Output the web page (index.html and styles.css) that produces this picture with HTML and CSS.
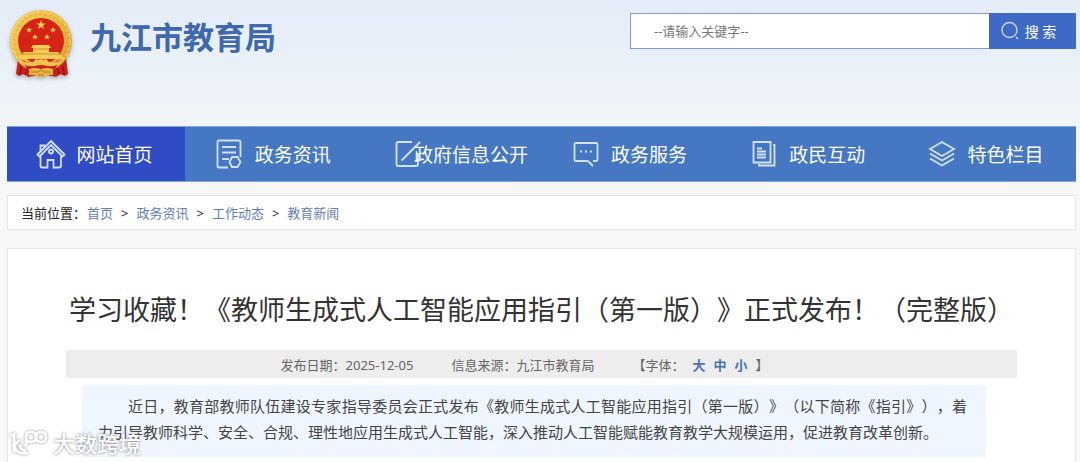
FILE: index.html
```html
<!DOCTYPE html>
<html lang="zh-CN">
<head>
<meta charset="utf-8">
<meta name="viewport" content="width=device-width, initial-scale=1">
<title>九江市教育局</title>
<link rel="stylesheet" href="styles.css">
</head>
<body>
<header class="header">
  <a class="brand" href="#">
    <svg class="emblem" viewBox="0 0 66 74" aria-hidden="true">
      <defs>
        <linearGradient id="gold" x1="0" y1="0" x2="1" y2="1">
          <stop offset="0" stop-color="#f6cf5e"/><stop offset=".5" stop-color="#eebb42"/><stop offset="1" stop-color="#d99a2b"/>
        </linearGradient>
        <path id="star" d="M0-5 1.2-1.6 4.8-1.5 1.9.6 2.9 4 0 2-2.9 4-1.9.6-4.8-1.5-1.2-1.6Z"/>
      </defs>
      <path d="M9 48 7 64l3 2 5-2 4 3 9-2 5 2 5-2 9 2 4-3 5 2 3-2-2-16Z" fill="#c9201c"/>
      <path d="M12 56l-1 8M18 58l-2 7M54 56l1 8M48 58l2 7" stroke="#8e1513" stroke-width="1.5"/>
      <circle cx="32" cy="31" r="31" fill="url(#gold)"/>
      <circle cx="32" cy="31" r="27" fill="none" stroke="#d79a30" stroke-width="4" stroke-dasharray="2 3" opacity=".3"/>
      <circle cx="32" cy="31" r="29" fill="none" stroke="#fae08c" stroke-width="1" stroke-dasharray="4 2"/>
      <circle cx="32" cy="31" r="23" fill="#d62318"/>
      <g fill="#f5cd54">
        <use href="#star" transform="translate(32 15)"/>
        <use href="#star" transform="translate(20 20) scale(.65)"/>
        <use href="#star" transform="translate(44 20) scale(.65)"/>
        <use href="#star" transform="translate(26 27) scale(.65)"/>
        <use href="#star" transform="translate(38 27) scale(.65)"/>
        <path d="M24 35h16l2 3h-2v4h10v3h3l2 4H9l2-4h3v-3h10v-4h-2Z"/>
      </g>
      <path d="M13 44h38M24 39h16" stroke="#cf902b"/>
      <path d="M13 50q19 9 38 0l-5 9H18Z" fill="#c9201c"/>
      <path d="M11 49q6 5 13 3l3-3 3 1 2-2 2 2 3-1 3 3q7 2 13-3-4 9-15 7-6-2-12 0-11 2-15-7Z" fill="#efc04c"/>
      <path d="M20 59q6-2 12 0 6-2 12 0v6q-6-1-9 2h-6q-3-3-9-2Z" fill="#e9b541"/>
      <path d="M22 62h7l3-2 3 2h7M29 65h6" fill="none" stroke="#b87924"/>
    </svg>
    <span class="brand-name">九江市教育局</span>
  </a>
  <form class="search" role="search">
    <input class="search-input" type="text" aria-label="请输入关键字" placeholder="--请输入关键字--">
    <button class="search-button" type="button">
      <svg class="search-icon" viewBox="0 0 18 20" aria-hidden="true"><circle cx="8.500" cy="9" r="7.500"/><path d="m15 16 2 2"/></svg>
      <span>搜 索</span>
    </button>
  </form>
</header>

<main class="page">
  <nav class="nav" aria-label="主导航">
    <a class="nav-item active" href="#">
      <svg class="nav-icon" viewBox="0 0 30 30"><path d="M1.500 15.500 15 2l13.500 13.500-2 2L15 6 3.500 17.500Z"/><path d="M4.500 12V6.500h4v2M4.500 17v9.500q0 2 2 2h5V21h6v7.500h5.500q2 0 2-2V17"/><circle cx="15" cy="12.500" r="2"/></svg>
      <span class="nav-label">网站首页</span>
    </a>
    <a class="nav-item" href="#">
      <svg class="nav-icon" viewBox="0 0 30 30"><path d="M14 28.500H5q-1.500 0-1.500-1.500V3Q3.500 1.500 5 1.500h20q1.500 0 1.500 1.500v15M8 8h14M8 13.500h14M8 20h7"/><path d="M18 18h5.500l3 5-3 5H18l-2.500-5Z"/></svg>
      <span class="nav-label">政务资讯</span>
    </a>
    <a class="nav-item" href="#">
      <svg class="nav-icon" viewBox="0 0 30 30"><path d="M20 3H6Q4.500 3 4.500 4.500v21Q4.500 27 6 27h18q2 0 2-2V14M9.500 21.500 28 3"/></svg>
      <span class="nav-label">政府信息公开</span>
    </a>
    <a class="nav-item" href="#">
      <svg class="nav-icon" viewBox="0 0 30 30"><path d="M17 22H5q-1.500 0-1.500-1.500v-15Q3.500 4 5 4h20q1.500 0 1.500 1.500v15Q26.500 22 25 22h-3M17 22l5 5"/><path class="dots" d="M9 12.500h2M14 12.500h2M19 12.500h2"/></svg>
      <span class="nav-label">政务服务</span>
    </a>
    <a class="nav-item" href="#">
      <svg class="nav-icon" viewBox="0 0 30 30"><path d="M4.500 3h17v20.500h-17ZM24 6h1.500v20.500H10V25M8 9.500h5M8 12.500h9M8 15.500h9M8 18.500h9"/></svg>
      <span class="nav-label">政民互动</span>
    </a>
    <a class="nav-item" href="#">
      <svg class="nav-icon" viewBox="0 0 30 30"><path d="m3 10 12-7 12 7-12 7ZM3 14.500l12 7 12-7M3 19.500l12 7 12-7"/></svg>
      <span class="nav-label">特色栏目</span>
    </a>
  </nav>

  <nav class="crumbs" aria-label="当前位置">
    <span class="crumbs-label">当前位置：</span>
    <a href="#">首页</a><span>&gt;</span>
    <a href="#">政务资讯</a><span>&gt;</span>
    <a href="#">工作动态</a><span>&gt;</span>
    <a href="#">教育新闻</a>
  </nav>

  <article class="article">
    <h1 class="title">学习收藏！《教师生成式人工智能应用指引（第一版）》正式发布！（完整版）</h1>
    <div class="meta">
      <span>发布日期：2025-12-05</span>
      <span>信息来源：九江市教育局</span>
      <span class="sizes"><span>【字体：</span><button type="button">大</button><button type="button">中</button><button type="button">小</button><span>】</span></span>
    </div>
    <p class="lead">近日，教育部教师队伍建设专家指导委员会正式发布《教师生成式人工智能应用指引（第一版）》（以下简称《指引》），着力引导教师科学、安全、合规、理性地应用生成式人工智能，深入推动人工智能赋能教育教学大规模运用，促进教育改革创新。</p>
  </article>
</main>

<div class="watermark">
  <svg class="watermark-logo" viewBox="0 0 40 30" aria-hidden="true"><path d="m2 8 4-2v19M12 12 6 17q2 10 14 8M12 16q0 7 6 6M18 18V9q0-5 5-5t5 5-5 5-5-4M28 9q0-5 5-5t5 5-5 5-5-5"/></svg>
  <span>大数跨境</span>
</div>
</body>
</html>
```
FILE: styles.css
```css
* {
  box-sizing: border-box;
}

body {
  margin: 0;
  min-height: 100vh;
  display: flex;
  flex-direction: column;
  background: #f7f7f7 linear-gradient(#e4ecf8, #f1f5f9 126px, #f7f7f7 190px) no-repeat;
  color: #333;
  font-family: "Noto Sans", "Noto Sans CJK SC", sans-serif;
  font-size: 13px;
  text-spacing-trim: space-all;
}

a {
  text-decoration: none;
}

button {
  border: 0;
  padding: 0;
  background: none;
  font: inherit;
  cursor: pointer;
}

.header {
  display: flex;
  justify-content: space-between;
  align-items: flex-start;
  height: 126px;
  padding: 10px 4px 0 9px;
}

.brand {
  display: flex;
  gap: 15px;
  color: #4068ad;
}

.emblem {
  width: 66px;
  height: 74px;
  filter: drop-shadow(0 2px 2px #8889);
}

.brand-name {
  font-size: 31px;
  font-weight: 700;
  line-height: 54px;
}

.search {
  display: flex;
  width: 446px;
  height: 36px;
  margin-top: 3px;
}

.search-input {
  flex: 1;
  min-width: 0;
  border: 1px solid #7c9bd9;
  border-right: 0;
  border-radius: 0;
  padding: 0 23px;
  background: #fff;
  color: #333;
  font: inherit;
  outline: 0;
}

.search-input::placeholder {
  color: #777;
}

.search-button {
  display: flex;
  justify-content: center;
  align-items: center;
  gap: 6px;
  width: 87px;
  padding-right: 8px;
  background: #3e6ac5;
  color: #fff;
  font-size: 14px;
}

.search-icon {
  width: 18px;
  height: 20px;
  fill: none;
  stroke: #c9d9f8;
  stroke-width: 1.3;
}

.page {
  flex: 1;
  display: flex;
  flex-direction: column;
  padding: 0 4px 0 7px;
}

.nav {
  display: grid;
  grid-template-columns: repeat(6, 1fr);
  height: 56px;
  border-top: 1px solid #83a3db;
  border-bottom: 1px solid #83a3db;
  background: #4577c3;
}

.nav-item {
  display: grid;
  align-items: center;
  padding-left: 29px;
  color: #fff;
  font-size: 19px;
}

.nav-item.active {
  background: #2f4cc5;
}

.nav-icon,
.nav-label {
  grid-area: 1 / 1;
}

.nav-icon {
  width: 30px;
  height: 30px;
  fill: none;
  stroke: #d3e1fa;
  stroke-width: 1.8;
}

.nav-icon .dots {
  stroke-width: 2;
}

.nav-label {
  justify-self: center;
  padding: 1px 0 0 8px;
  line-height: 24px;
  white-space: nowrap;
}

.crumbs {
  display: flex;
  align-items: center;
  gap: 8px;
  height: 35px;
  margin-top: 13px;
  padding: 0 13px;
  border: 1px solid #dfe6ec;
  background: #fff;
  color: #222;
}

.crumbs a {
  color: #6280b5;
}

.crumbs-label {
  width: 58px;
  white-space: nowrap;
}

.article {
  flex: 1;
  margin-top: 18px;
  padding: 36px 58px 0;
  border: 1px solid #dfe6ec;
  border-bottom: 0;
  background: #fff;
}

.title {
  margin: 0 -16px 15px;
  font-size: 27px;
  font-weight: 400;
  line-height: 50px;
  text-align: center;
}

.meta {
  display: flex;
  justify-content: center;
  gap: 38px;
  height: 28px;
  padding-right: 34px;
  background: #ededed;
  color: #666;
  line-height: 30px;
}

.sizes {
  display: flex;
  gap: 8px;
}

.sizes button {
  color: #4a72b0;
  font-weight: 700;
}

.lead {
  margin: 7px 31px 0 16px;
  padding: 8px 19px 12px 16px;
  background: #eff6ff;
  color: #444;
  font-size: 15px;
  line-height: 26px;
  text-align: justify;
  text-indent: 2em;
}

.watermark {
  position: absolute;
  left: 8px;
  top: 427px;
  display: flex;
  align-items: center;
  gap: 5px;
  color: #fff;
  font-size: 22px;
  font-weight: 500;
  line-height: 32px;
  text-shadow: 0 0 3px #777;
}

.watermark-logo {
  width: 40px;
  height: 30px;
  fill: none;
  stroke: #fff;
  stroke-width: 3;
  filter: drop-shadow(0 0 1px #888);
}
```
